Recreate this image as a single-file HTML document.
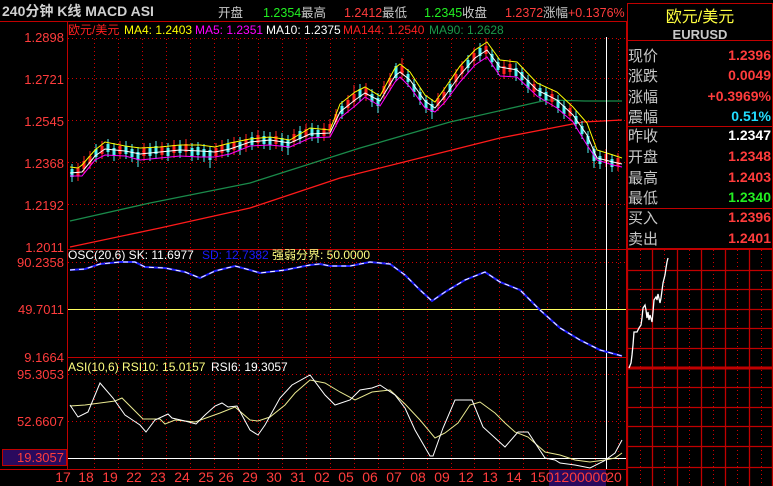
<!DOCTYPE html>
<html><head><meta charset="utf-8">
<style>
html,body{margin:0;padding:0;background:#000;width:773px;height:486px;overflow:hidden}
svg{display:block}
text{font-family:"Liberation Sans","Noto Sans CJK SC",sans-serif}
</style></head><body>
<svg width="773" height="486" viewBox="0 0 773 486" xmlns="http://www.w3.org/2000/svg">
<rect width="773" height="486" fill="#000"/>
<text x="2" y="16" font-family="Liberation Serif,Noto Serif CJK SC,serif" font-weight="bold" font-size="14" fill="#d0d0d0">240分钟 K线 MACD ASI</text>
<g font-size="12.5">
<text x="218" y="17" fill="#c8c8c8">开盘</text>
<text x="263" y="17" fill="#22ee22">1.2354</text><text x="301" y="17" fill="#c8c8c8">最高</text>
<text x="344" y="17" fill="#ff3c3c">1.2412</text><text x="382" y="17" fill="#c8c8c8">最低</text>
<text x="424" y="17" fill="#22ee22">1.2345</text><text x="462" y="17" fill="#c8c8c8">收盘</text>
<text x="505" y="17" fill="#ff3c3c">1.2372</text><text x="543" y="17" fill="#c8c8c8">涨幅</text>
<text x="568" y="17" fill="#ff3c3c">+0.1376%</text>
</g>
<line x1="0" y1="21.5" x2="627" y2="21.5" stroke="#c00000"/>
<g stroke="#c00000" fill="none">
<line x1="67.5" y1="21" x2="67.5" y2="469"/>
<line x1="626.5" y1="21" x2="626.5" y2="486"/>
<line x1="67" y1="249.5" x2="627" y2="249.5"/>
<line x1="67" y1="357.5" x2="627" y2="357.5"/>
<line x1="0" y1="469.5" x2="627" y2="469.5"/>
</g>
<g stroke="#d00000" stroke-dasharray="1,3" stroke-width="1">
<line x1="68" y1="38.5" x2="626" y2="38.5"/>
<line x1="68" y1="78.5" x2="626" y2="78.5"/>
<line x1="68" y1="120.5" x2="626" y2="120.5"/>
<line x1="68" y1="162.5" x2="626" y2="162.5"/>
<line x1="68" y1="204.5" x2="626" y2="204.5"/>
<line x1="68" y1="262.5" x2="626" y2="262.5"/>
<line x1="68" y1="374.5" x2="626" y2="374.5"/>
<line x1="68" y1="421.5" x2="626" y2="421.5"/>
<path d="M94.5 39V469M118.5 39V469M142.5 39V469M166.5 39V469M190.5 39V469M214.5 39V469M238.5 39V469M258.5 39V469M282.5 39V469M306.5 39V469M330.5 39V469M354.5 39V469M378.5 39V469M403.5 39V469M427.5 39V469M451.5 39V469M474.5 39V469M499.5 39V469M523.5 39V469M547.5 39V469M571.5 39V469M595.5 39V469M618.5 39V469"/>
</g>
<g font-size="13" fill="#ff3c3c" text-anchor="end">
<text x="64" y="42">1.2898</text><text x="64" y="84">1.2721</text>
<text x="64" y="126">1.2545</text><text x="64" y="168">1.2368</text>
<text x="64" y="210">1.2192</text><text x="64" y="252">1.2011</text>
<text x="64" y="267">90.2358</text><text x="64" y="314">49.7011</text>
<text x="64" y="362">9.1664</text><text x="64" y="379">95.3053</text>
<text x="64" y="426">52.6607</text>
</g>
<rect x="2.5" y="449.5" width="64" height="16" fill="#2a0a5e" stroke="#c00000"/>
<text x="64" y="462" font-size="13" fill="#ff3c3c" text-anchor="end">19.3057</text>
<g font-size="12">
<text x="68" y="34" fill="#ff2020">欧元/美元</text>
<text x="124" y="34" fill="#ffff00">MA4: 1.2403</text>
<text x="195" y="34" fill="#ff00ff">MA5: 1.2351</text>
<text x="266" y="34" fill="#ffffff">MA10: 1.2375</text>
<text x="343" y="34" fill="#ff2020">MA144: 1.2540</text>
<text x="429" y="34" fill="#1a9a4a">MA90: 1.2628</text>
<text x="68" y="259" fill="#ffffff">OSC(20,6) SK: 11.6977</text>
<text x="202" y="259" fill="#1a1aff">SD: 12.7382</text>
<text x="272" y="259" fill="#ffff80">强弱分界: 50.0000</text>
<text x="68" y="371" fill="#ffff80">ASI(10,6) RSI10: 15.0157</text>
<text x="211" y="371" fill="#ffffff">RSI6: 19.3057</text>
</g>
<polyline fill="none" stroke="#1a8a4a" stroke-width="1.3" points="70,221 150,203 250,183 360,148 450,122 547,100 585,101 622,101"/>
<polyline fill="none" stroke="#ff1a1a" stroke-width="1.3" points="70,247 160,228 250,208 340,178 420,158 500,138 583,122 622,120"/>
<!-- candles -->
<path fill="none" stroke="#50f0f0" stroke-width="1" d="M72 164v18M96 144v18M108 139v18M114 143v18M126 141v18M132 144v18M138 147v20M150 143v18M156 141v18M168 143v18M180 140v18M192 143v18M198 142v18M204 144v18M210 146v22M228 139v18M240 137v18M252 132v18M264 131v18M270 132v18M282 133v18M288 135v20M300 126v18M312 123v18M318 125v18M342 101v18M360 84v18M372 89v18M378 93v20M396 63v18M408 69v18M414 79v18M420 87v18M426 95v18M432 99v20M450 79v18M468 55v18M480 43v18M492 49v18M498 57v18M516 63v18M522 67v18M528 75v18M540 83v18M546 87v18M558 95v18M564 101v18M576 111v18M582 121v18M588 131v22M594 146v22M600 151v18M612 154v18"/>
<path fill="none" stroke="#50f0f0" stroke-width="3" d="M72 169v8M96 149v8M108 144v8M114 148v8M126 146v8M132 149v8M138 152v8M150 148v8M156 146v8M168 148v8M180 145v8M192 148v8M198 147v8M204 149v8M210 150v10M228 144v8M240 142v8M252 137v8M264 136v8M270 137v8M282 138v8M288 140v8M300 131v8M312 128v8M318 130v8M342 106v8M360 89v8M372 94v8M378 98v8M396 66v12M408 74v8M414 84v8M420 92v8M426 100v8M432 104v8M450 84v8M468 60v8M480 48v8M492 54v8M498 62v8M516 68v8M522 72v8M528 80v8M540 88v8M546 92v8M558 100v8M564 106v8M576 116v8M582 126v8M588 136v8M594 149v12M600 156v8M612 159v8"/>
<path fill="none" stroke="#ff2020" stroke-width="1" d="M78 163v18M84 156v18M90 151v18M102 141v18M120 141v18M144 143v18M162 142v18M174 140v18M186 139v18M216 143v18M222 140v18M234 137v18M246 134v18M258 130v18M276 131v18M294 129v18M306 124v18M324 123v18M330 119v18M336 109v18M348 95v18M354 85v22M366 83v18M384 81v18M390 73v18M402 58v22M438 93v18M444 87v18M456 69v18M462 61v18M474 48v18M486 38v22M504 61v18M510 59v18M534 79v18M552 89v18M570 103v18M606 149v18M618 153v18"/>
<path fill="none" stroke="#ff2020" stroke-width="3" d="M78 168v8M84 161v8M90 156v8M102 146v8M120 146v8M144 148v8M162 147v8M174 145v8M186 144v8M216 148v8M222 145v8M234 142v8M246 139v8M258 135v8M276 136v8M294 134v8M306 129v8M324 128v8M330 124v8M336 114v8M348 100v8M354 94v8M366 88v8M384 86v8M390 78v8M402 66v8M438 98v8M444 92v8M456 74v8M462 66v8M474 53v8M486 46v8M504 66v8M510 64v8M534 84v8M552 94v8M570 108v8M606 154v8M618 158v8"/>
<polyline fill="none" stroke="#ffff00" points="70,167 78,168 82,165 95,150 105,142 125,146 140,148 160,147 180,145 200,145 215,147 230,143 250,139 270,137 290,140 310,128 330,130 340,104 355,92 365,87 380,96 395,68 400,64 410,72 425,95 435,102 445,88 460,66 475,50 487,42 500,60 517,62 537,83 557,92 573,107 587,123 597,150 613,155 622,158"/>
<polyline fill="none" stroke="#ffffff" points="70,173 82,172 95,156 105,149 125,151 140,154 160,152 180,150 200,151 215,152 230,149 250,142 270,140 290,143 310,134 330,133 340,112 355,100 365,93 380,101 395,76 400,72 410,80 425,101 435,108 445,96 460,75 475,58 487,50 500,67 517,70 537,90 557,100 573,115 587,135 597,158 613,162 622,164"/>
<polyline fill="none" stroke="#ff00ff" points="70,176 82,176 95,160 105,155 125,156 140,160 160,158 180,156 200,157 215,157 230,154 250,146 270,145 290,147 310,138 330,137 340,118 355,106 365,97 380,106 395,82 400,77 410,87 425,108 435,112 445,102 460,82 475,65 487,57 500,76 517,77 537,96 557,108 573,122 587,145 597,160 613,165 622,167"/>
<line x1="606.5" y1="37" x2="606.5" y2="469" stroke="#ffffff"/>
<line x1="68" y1="309.5" x2="626" y2="309.5" stroke="#ffff60"/>
<polyline fill="none" stroke="#2020ff" stroke-width="2" points="70,270 85,269 100,264 120,262 135,262 145,267 165,268 185,272 195,276 200,278 215,271 235,266 250,270 260,273 285,270 310,265 320,264 330,266 350,266 370,262 390,264 405,275 420,290 432,301 445,292 465,280 485,272 500,282 520,290 540,310 560,328 580,340 600,350 622,356"/>
<polyline fill="none" stroke="#ffffff" stroke-dasharray="5,4" points="70,270 85,269 100,264 120,262 135,262 145,267 165,268 185,272 195,276 200,278 215,271 235,266 250,270 260,273 285,270 310,265 320,264 330,266 350,266 370,262 390,264 405,275 420,290 432,301 445,292 465,280 485,272 500,282 520,290 540,310 560,328 580,340 600,350 622,356"/>
<line x1="68" y1="458.5" x2="626" y2="458.5" stroke="#ffffff"/>
<polyline fill="none" stroke="#e8e890" points="70,406 85,405 100,403 115,401 122,398 143,419 160,419 165,424 175,420 195,422 220,413 235,407 250,420 258,421 270,417 285,405 295,393 310,380 325,383 340,392 355,400 372,392 390,390 405,404 420,420 435,438 445,433 458,423 470,405 480,402 495,413 505,423 515,432 528,437 545,452 560,455 575,460 590,462 605,460 615,458 622,453"/>
<polyline fill="none" stroke="#ffffff" points="70,405 78,417 88,412 100,383 113,398 125,415 140,425 146,432 155,420 168,414 172,418 185,421 196,424 205,415 215,406 222,403 228,407 237,406 250,430 258,435 265,425 280,398 292,385 310,375 325,395 335,405 350,400 360,390 372,388 380,385 395,395 405,408 415,430 430,456 433,456 443,428 455,400 472,400 483,427 505,447 518,432 528,432 545,458 555,460 560,463 575,465 590,468 604,461 615,453 622,440"/>
<rect x="549" y="470" width="57" height="16" fill="#2a0a5e"/>
<g font-size="14" fill="#ff3c3c" text-anchor="middle">
<text x="63" y="482">17</text><text x="86" y="482">18</text><text x="110" y="482">19</text>
<text x="134" y="482">22</text><text x="158" y="482">23</text><text x="182" y="482">24</text>
<text x="206" y="482">25</text><text x="226" y="482">26</text><text x="250" y="482">29</text>
<text x="274" y="482">30</text><text x="298" y="482">31</text><text x="322" y="482">02</text>
<text x="346" y="482">05</text><text x="370" y="482">06</text><text x="394" y="482">07</text>
<text x="418" y="482">08</text><text x="442" y="482">09</text><text x="466" y="482">12</text>
<text x="490" y="482">13</text><text x="514" y="482">14</text><text x="538" y="482">15</text>
<text x="577" y="482">01200000</text><text x="614" y="482">20</text>
</g>
<g stroke="#c00000" fill="none">
<rect x="627.5" y="3.5" width="145" height="245"/>
<line x1="627" y1="40.5" x2="773" y2="40.5"/>
<line x1="627" y1="126.5" x2="773" y2="126.5"/>
<line x1="627" y1="208.5" x2="773" y2="208.5"/>
<line x1="627" y1="249.5" x2="773" y2="249.5"/>
</g>
<text x="700" y="22" font-size="16" fill="#ffff40" text-anchor="middle">欧元/美元</text>
<text x="700" y="39" font-size="13" font-weight="bold" fill="#c8c8c8" text-anchor="middle">EURUSD</text>
<g font-size="15" fill="#c8c8c8">
<text x="628" y="61">现价</text><text x="628" y="81">涨跌</text><text x="628" y="102">涨幅</text><text x="628" y="122">震幅</text>
<text x="628" y="141">昨收</text><text x="628" y="162">开盘</text><text x="628" y="183">最高</text><text x="628" y="203">最低</text>
<text x="628" y="223">买入</text><text x="628" y="244">卖出</text>
</g>
<g font-size="14" font-weight="bold" text-anchor="end">
<text x="771" y="60" fill="#ff3c3c">1.2396</text><text x="771" y="80" fill="#ff3c3c">0.0049</text>
<text x="771" y="101" fill="#ff3c3c">+0.3969%</text><text x="771" y="121" fill="#22ddff">0.51%</text>
<text x="771" y="140" fill="#ffffff">1.2347</text><text x="771" y="161" fill="#ff3c3c">1.2348</text>
<text x="771" y="182" fill="#ff3c3c">1.2403</text><text x="771" y="202" fill="#22ee22">1.2340</text>
<text x="771" y="222" fill="#ff3c3c">1.2396</text><text x="771" y="243" fill="#ff3c3c">1.2401</text>
</g>
<g fill="none" stroke="#c00000" stroke-width="1.3">
<path d="M627.5 250V486M652.5 250V486M677.5 250V486M701.5 250V486M725.5 250V486M749.5 250V486M772.5 250V486"/>
<path d="M627 270.5H773M627 289.5H773M627 309.5H773M627 328.5H773M627 348.5H773M627 387.5H773M627 407.5H773M627 426.5H773M627 446.5H773M627 467.5H773"/>
</g>
<path fill="none" stroke="#d00000" stroke-dasharray="1,3" d="M640.5 250V486M664.5 250V486M689.5 250V486M713.5 250V486M737.5 250V486M761.5 250V486"/>
<line x1="627" y1="368" x2="773" y2="368" stroke="#c00000" stroke-width="3"/>
<polyline fill="none" stroke="#ffffff" stroke-width="1.3" points="629,368 631,363 632,355 633,345 634,332 637,332 639,328 641,325 642,318 643,308 645,305 646,310 647,318 648,312 649,320 650,315 652,322 653,312 654,300 656,297 657,300 658,294 660,303 661,298 663,283 665,275 666,268 667,262 668,258"/>
</svg>
</body></html>
